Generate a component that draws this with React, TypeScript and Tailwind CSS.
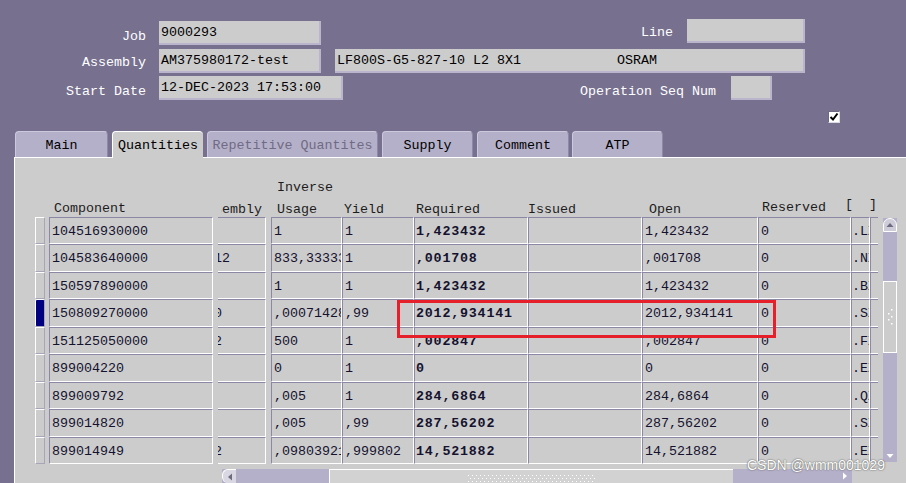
import React from "react";

type Row = {
  comp: string;
  asm: string;
  usage: string;
  yld: string;
  req: string;
  open: string;
  res: string;
  last: string;
};

const rows: Row[] = [
  { comp: "104516930000", asm: "1", usage: "1", yld: "1", req: "1,423432", open: "1,423432", res: "0", last: ".LX" },
  { comp: "104583640000", asm: ",0012", usage: "833,333333", yld: "1", req: ",001708", open: ",001708", res: "0", last: ".NX" },
  { comp: "150597890000", asm: "1", usage: "1", yld: "1", req: "1,423432", open: "1,423432", res: "0", last: ".BX" },
  { comp: "150809270000", asm: "1400", usage: ",000714285", yld: ",99", req: "2012,934141", open: "2012,934141", res: "0", last: ".SX" },
  { comp: "151125050000", asm: ",002", usage: "500", yld: "1", req: ",002847", open: ",002847", res: "0", last: ".FX" },
  { comp: "899004220", asm: "0", usage: "0", yld: "1", req: "0", open: "0", res: "0", last: ".EX" },
  { comp: "899009792", asm: "200", usage: ",005", yld: "1", req: "284,6864", open: "284,6864", res: "0", last: ".QX" },
  { comp: "899014820", asm: "200", usage: ",005", yld: ",99", req: "287,56202", open: "287,56202", res: "0", last: ".SX" },
  { comp: "899014949", asm: "10,2", usage: ",0980392156", yld: ",999802", req: "14,521882", open: "14,521882", res: "0", last: ".EX" },
];

const cellBase =
  "h-full shrink-0 overflow-hidden whitespace-pre flex items-center pt-[2px] border border-t-[#8c87a4] border-l-[#8c87a4] border-b-white border-r-white text-[#14122e]";

function Field({ w, text, className = "" }: { w: string; text?: string; className?: string }) {
  return (
    <div
      className={`${w} ${className} h-[24px] shrink-0 overflow-hidden whitespace-pre border-b-2 border-r-2 border-[#bab5cd] bg-[#cccccc] pl-[2px] pt-[1px] leading-[22px] text-black`}
    >
      {text}
    </div>
  );
}

function Label({ w, text, pt }: { w: string; text: string; pt: string }) {
  return <div className={`${w} ${pt} shrink-0 text-right leading-[16px] text-white`}>{text}</div>;
}

function Tab({ label, w, ml, active, dim }: { label: string; w: string; ml: string; active?: boolean; dim?: boolean }) {
  if (active) {
    return (
      <div
        className={`${w} ${ml} relative z-10 -mb-[1px] flex h-[27px] items-center justify-center rounded-t-[4px] border-l border-t border-white bg-[#cccccc] pt-[2px] text-black`}
      >
        {label}
      </div>
    );
  }
  return (
    <div
      className={`${w} ${ml} flex h-[26px] items-center justify-center rounded-t-[4px] border-l border-t border-r border-l-[#cdc9dc] border-t-[#cdc9dc] border-r-[#8e89a6] bg-[#b5b0c9] pt-[3px] ${dim ? "text-[#6f6b84]" : "text-black"}`}
    >
      {label}
    </div>
  );
}

function GripDots({ w, h }: { w: number; h: number }) {
  const dots: React.ReactNode[] = [];
  for (let y = 0; y < h; y += 3) {
    for (let x = (y / 3) % 2 ? 2 : 0; x < w; x += 4) {
      dots.push(<rect key={`${x}-${y}`} x={x} y={y} width="1" height="1" fill="#ffffff" />);
    }
  }
  return (
    <svg width={w} height={h} viewBox={`0 0 ${w} ${h}`}>
      {dots}
    </svg>
  );
}

export default function App() {
  return (
    <div className="relative flex h-[483px] w-[906px] flex-col overflow-hidden bg-[#77718f] font-['Liberation_Mono',monospace] text-[13.33px]">
      {/* header form */}
      <div className="mt-[19px] flex h-[26px] items-start">
        <Label w="w-[146px]" pt="pt-[10px]" text="Job" />
        <Field w="w-[162px]" className="ml-[13px] mt-[2px]" text="9000293" />
        <Label w="w-[352px]" pt="pt-[6px]" text="Line" />
        <Field w="w-[118px]" className="ml-[14px]" />
      </div>
      <div className="mt-[4px] flex h-[24px] items-start">
        <Label w="w-[146px]" pt="pt-[6px]" text="Assembly" />
        <Field w="w-[162px]" className="ml-[13px]" text="AM375980172-test" />
        <Field w="w-[470px]" className="ml-[14px]" text={"LF800S-G5-827-10 L2 8X1            OSRAM"} />
      </div>
      <div className="mt-[3px] flex h-[24px] items-start">
        <Label w="w-[146px]" pt="pt-[8px]" text="Start Date" />
        <Field w="w-[184px]" className="ml-[13px]" text="12-DEC-2023 17:53:00" />
        <Label w="w-[373px]" pt="pt-[8px]" text="Operation Seq Num" />
        <Field w="w-[41px]" className="ml-[15px]" />
      </div>
      <div className="mt-[11px] flex h-[12px]">
        <div className="ml-[828px] h-[12px] w-[12px] border border-t-[#6d6980] border-l-[#6d6980] border-b-[#dcd9e6] border-r-[#dcd9e6] bg-white">
          <svg width="10" height="10" viewBox="0 0 10 10">
            <path d="M1.5 5 L4 7.5 L8.5 1.5" stroke="#000" strokeWidth="2" fill="none" />
          </svg>
        </div>
      </div>

      {/* tabs */}
      <div className="mt-[8px] flex h-[26px] items-end">
        <Tab label="Main" w="w-[93px]" ml="ml-[15px]" />
        <Tab label="Quantities" w="w-[91px]" ml="ml-[4px]" active />
        <Tab label="Repetitive Quantites" w="w-[171px]" ml="ml-[4px]" dim />
        <Tab label="Supply" w="w-[91px]" ml="ml-[4px]" />
        <Tab label="Comment" w="w-[92px]" ml="ml-[4px]" />
        <Tab label="ATP" w="w-[91px]" ml="ml-[3px]" />
      </div>

      {/* panel */}
      <div className="ml-[14px] flex flex-1 border-l border-t border-white bg-[#cccccc] pl-[20px]">
        {/* fixed columns */}
        <div className="flex flex-col">
          <div className="flex h-[59px] items-end pb-[1px]">
            <div className="ml-[19px] leading-[14px] text-[#1c1c1c]">Component</div>
          </div>
          {rows.map((r, i) => (
            <div key={r.comp} className={`flex ${i % 2 ? "h-[28px]" : "h-[27px]"}`}>
              <div
                className={`h-full w-[10px] border border-l-white border-t-white border-r-[#a9a5b9] border-b-[#a9a5b9] ${i === 3 ? "rounded-[2px] bg-[#000080]" : ""}`}
              />
              <div className={`${cellBase} ml-[4px] w-[164px] pl-[2px]`}>{r.comp}</div>
            </div>
          ))}
        </div>

        {/* scrolled columns */}
        <div className="ml-[5px] flex w-[660px] flex-col overflow-hidden">
          <div className="ml-[-29px] flex flex-col">
            <div className="flex h-[59px] items-end leading-[14px] text-[#1c1c1c]">
              <div className="w-[77px] shrink-0">
                <div className="ml-[32px] overflow-hidden whitespace-pre">
                  <div className="ml-[-23px]">Assembly</div>
                </div>
              </div>
              <div className="ml-[5px] flex w-[71px] shrink-0 flex-col pl-[6px]">
                <span className="mb-[8px]">Inverse</span>
                <span>Usage</span>
              </div>
              <div className="w-[72px] shrink-0 pl-[2px]">Yield</div>
              <div className="w-[114px] shrink-0 pl-[2px]">Required</div>
              <div className="w-[114px] shrink-0">Issued</div>
              <div className="w-[116px] shrink-0 pl-[7px]">Open</div>
              <div className="w-[93px] shrink-0 pb-[2px] pl-[4px]">Reserved</div>
              <div className="ml-[-6px] w-[40px] shrink-0 whitespace-pre pb-[5px]">{"[  ]"}</div>
            </div>
            {rows.map((r, i) => (
              <div key={r.comp} className={`flex ${i % 2 ? "h-[28px]" : "h-[27px]"}`}>
                <div className={`${cellBase} w-[77px] pl-0`}>{r.asm}</div>
                <div className={`${cellBase} ml-[5px] w-[71px] pl-[2px]`}>{r.usage}</div>
                <div className={`${cellBase} w-[72px] pl-[2px]`}>{r.yld}</div>
                <div className={`${cellBase} w-[114px] pl-[1px] font-bold tracking-[0.8px]`}>{r.req}</div>
                <div className={`${cellBase} w-[114px]`} />
                <div className={`${cellBase} w-[116px] pl-[2px]`}>{r.open}</div>
                <div className={`${cellBase} w-[93px] pl-[2px]`}>{r.res}</div>
                <div className={`${cellBase} w-[19px] pl-0`}>{r.last}</div>
                <div className={`${cellBase} w-[120px] pl-[2px]`} />
              </div>
            ))}
          </div>

          {/* horizontal scrollbar */}
          <div className="ml-[4px] mt-[5px] flex h-[14px] w-[630px] shrink-0 bg-[#b5b0c9]">
            <div className="flex h-[14px] w-[14px] items-center justify-center rounded-l-[6px] border-l border-t border-white bg-[#d9d8e2]">
              <svg width="6" height="8" viewBox="0 0 6 8">
                <path d="M5 0.5 L1 4 L5 7.5 Z" fill="#6e6a80" />
              </svg>
            </div>
            <div className="ml-[93px] flex h-[14px] w-[404px] items-end justify-center border-l border-t border-white bg-[#d2d2d2] pb-[1px]">
              <GripDots w={128} h={7} />
            </div>
            <div className="ml-auto flex h-[14px] w-[14px] items-center justify-center">
              <svg width="6" height="8" viewBox="0 0 6 8">
                <path d="M1 0.5 L5 4 L1 7.5 Z" fill="#ffffff" />
              </svg>
            </div>
          </div>
        </div>

        {/* vertical scrollbar */}
        <div className="ml-[5px] mt-[60px] flex h-[244px] w-[14px] flex-col bg-[#b5b0c9]">
          <div className="flex h-[14px] w-[14px] items-center justify-center rounded-t-full border border-white bg-[#cfccda]">
            <svg width="8" height="6" viewBox="0 0 8 6">
              <path d="M0.5 5 L4 1 L7.5 5 Z" fill="#6e6a80" />
            </svg>
          </div>
          <div className="mt-[49px] flex h-[72px] w-[14px] items-center justify-center border border-white bg-[#cccccc]">
            <svg width="8" height="16" viewBox="0 0 8 16">
              <rect x="5" y="0" width="1.5" height="1.5" fill="#fff" />
              <rect x="2" y="4" width="1.5" height="1.5" fill="#fff" />
              <rect x="5" y="7" width="1.5" height="1.5" fill="#fff" />
              <rect x="2" y="10" width="1.5" height="1.5" fill="#fff" />
              <rect x="5" y="14" width="1.5" height="1.5" fill="#fff" />
            </svg>
          </div>
          <div className="mt-auto flex h-[12px] w-[14px] items-center justify-center rounded-b-full">
            <svg width="8" height="6" viewBox="0 0 8 6">
              <path d="M0.5 1 L4 5 L7.5 1 Z" fill="#ffffff" />
            </svg>
          </div>
        </div>
      </div>

      {/* annotation */}
      <div className="absolute left-[397px] top-[300px] h-[38px] w-[379px] border-[3px] border-[#e6202b]" />
      <div className="absolute left-[747px] top-[457px] font-['Liberation_Sans',Arial,sans-serif] text-[14px] leading-[16px] text-white [text-shadow:0_0_1px_#555,0_0_2px_#777]">
        CSDN @wmm001029
      </div>
    </div>
  );
}
